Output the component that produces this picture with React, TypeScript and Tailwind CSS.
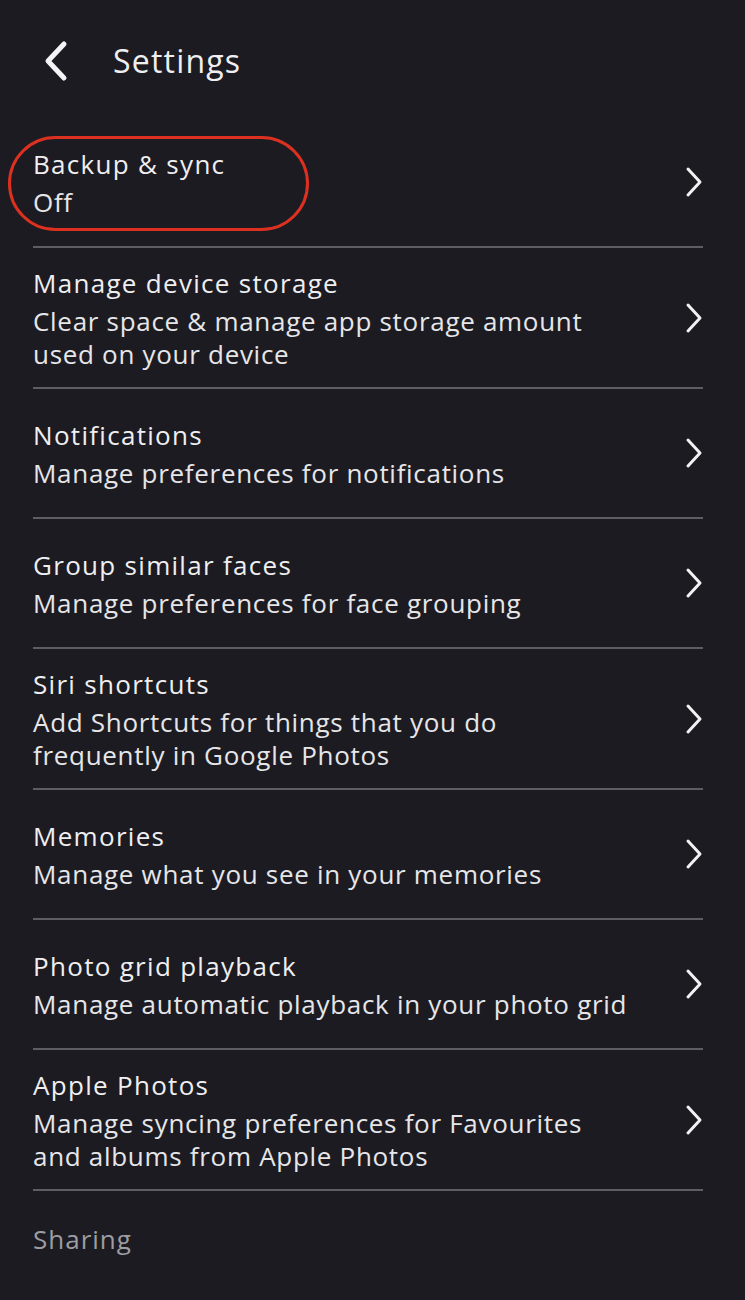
import React from "react";

interface Row {
  title: string;
  lines: string[];
}

const rows: Row[] = [
  { title: "Manage device storage", lines: ["Clear space & manage app storage amount", "used on your device"] },
  { title: "Notifications", lines: ["Manage preferences for notifications"] },
  { title: "Group similar faces", lines: ["Manage preferences for face grouping"] },
  { title: "Siri shortcuts", lines: ["Add Shortcuts for things that you do", "frequently in Google Photos"] },
  { title: "Memories", lines: ["Manage what you see in your memories"] },
  { title: "Photo grid playback", lines: ["Manage automatic playback in your photo grid"] },
  { title: "Apple Photos", lines: ["Manage syncing preferences for Favourites", "and albums from Apple Photos"] },
];

function Chevron() {
  return (
    <svg width="22" height="32" viewBox="0 0 22 32" fill="none" className="shrink-0">
      <path d="M5 3 L17 16 L5 29" stroke="#f2f2f4" strokeWidth="3" strokeLinecap="round" strokeLinejoin="round" />
    </svg>
  );
}

function SettingRow({ title, lines }: Row) {
  return (
    <div className="flex items-center justify-between min-h-[130px] py-4 border-b-2 border-[#5d5d62]">
      <div>
        <p className="text-[26px] leading-[38px] font-medium tracking-[1.3px] text-[#efeff1]">{title}</p>
        <div className="mt-[3px]">
          {lines.map((l) => (
            <p key={l} className="text-[26px] leading-[33px] tracking-[0.7px] text-[#e6e6e9]">
              {l}
            </p>
          ))}
        </div>
      </div>
      <div className="-mr-[2px]">
        <Chevron />
      </div>
    </div>
  );
}

export default function App() {
  return (
    <div className="w-[745px] h-[1300px] bg-[#1c1b21] overflow-hidden" style={{ fontFamily: "'Open Sans', 'Noto Sans', sans-serif" }}>
      {/* header */}
      <div className="h-[118px] flex items-start pt-[38px] pl-[40px]">
        <svg width="32" height="46" viewBox="0 0 32 46" fill="none">
          <path d="M24 6 L8 23 L24 40" stroke="#f4f4f6" strokeWidth="5" strokeLinecap="round" strokeLinejoin="round" />
        </svg>
        <h1 className="ml-[41px] text-[32px] leading-[46px] tracking-[1.2px] text-[#efeff1]">Settings</h1>
      </div>

      <div className="pl-[33px] pr-[42px]">
        <div className="relative">
          <div className="absolute left-[-25px] top-[18px] w-[301px] h-[95px] rounded-[48px] border-[3px] border-[#dc3120]" />
          <SettingRow title="Backup & sync" lines={["Off"]} />
        </div>
        {rows.map((r) => (
          <SettingRow key={r.title} {...r} />
        ))}
        <p className="mt-[30px] text-[26px] leading-[36px] tracking-[1px] text-[#9d9da3]">Sharing</p>
      </div>
    </div>
  );
}
